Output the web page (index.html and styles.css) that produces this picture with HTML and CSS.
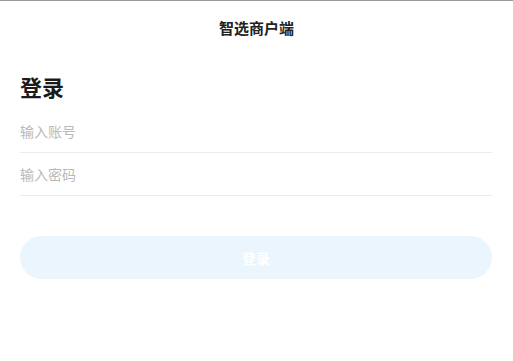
FILE: index.html
```html
<!DOCTYPE html>
<html lang="zh">
<head>
<meta charset="utf-8">
<title>智选商户端</title>
<link rel="stylesheet" href="styles.css">
</head>
<body>
<div class="page">
  <header class="navbar">智选商户端</header>
  <main class="content">
    <h1 class="heading">登录</h1>
    <div class="field"><input class="input" type="text" placeholder="输入账号"></div>
    <div class="field"><input class="input" type="password" placeholder="输入密码"></div>
    <button class="submit" type="button">登录</button>
  </main>
</div>
</body>
</html>
```
FILE: styles.css
```css
* { box-sizing: border-box; }
html, body { margin: 0; padding: 0; background: #fff; }
body {
  font-family: "Noto Sans CJK SC", "Noto Sans", sans-serif;
  color: #1a1a1a;
}
.page {
  border-top: 1px solid #999;
  min-height: 361px;
}
.navbar {
  height: 53px;
  display: flex;
  align-items: center;
  justify-content: center;
  font-size: 15px;
  font-weight: 700;
  color: #222;
}
.content {
  padding: 0 21px 0 20px;
}
.heading {
  margin: 17px 0 9px;
  font-size: 22px;
  line-height: 30px;
  font-weight: 700;
  color: #1a1a1a;
}
.field {
  height: 43px;
  border-bottom: 1px solid #ececec;
  display: flex;
  align-items: center;
  padding-bottom: 1px;
}
.input {
  border: 0;
  outline: none;
  padding: 0;
  width: 100%;
  font-family: inherit;
  font-size: 14px;
  color: #333;
  background: transparent;
}
.input::placeholder { color: #b9b9b9; }
.submit {
  display: block;
  width: 100%;
  height: 43px;
  margin-top: 40px;
  border: 0;
  border-radius: 21.5px;
  background: #eaf5fe;
  color: #fff;
  font-family: inherit;
  font-size: 14px;
  font-weight: 700;
}
```
